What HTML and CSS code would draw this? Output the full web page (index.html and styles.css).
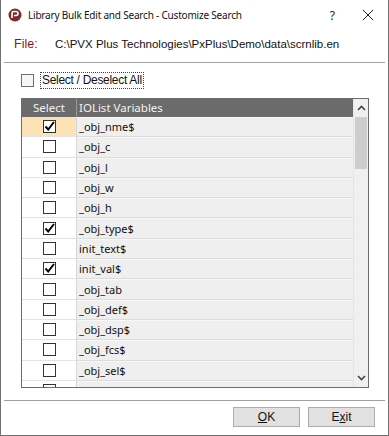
FILE: index.html
```html
<!DOCTYPE html>
<html lang="en">
<head>
    <meta charset="UTF-8">
    <title>Library Bulk Edit and Search - Customize Search</title>
    <link rel="stylesheet" href="styles.css">
</head>
<body>
<div class="window">
    <!-- Title bar -->
    <div class="titlebar">
        <svg class="app-icon" width="14" height="14" viewBox="0 0 14 14">
            <circle cx="7" cy="7" r="6.5" fill="#7a2b2b"/>
            <path d="M4 10 L4 5 Q4 3.5 5.5 3.5 L8 3.5 Q10 3.5 10 5.5 Q10 7.5 8 7.5 L6 7.5" fill="none" stroke="#fff" stroke-width="1.6"/>
        </svg>
        <span class="title">Library Bulk Edit and Search - Customize Search</span>
        <span class="help">?</span>
        <svg class="close" width="12" height="12" viewBox="0 0 12 12">
            <path d="M1 1 L11 11 M11 1 L1 11" stroke="#222" stroke-width="1"/>
        </svg>
    </div>

    <!-- File path -->
    <div class="file-row">
        <span class="file-label">File:</span>
        <span class="file-path">C:\PVX Plus Technologies\PxPlus\Demo\data\scrnlib.en</span>
    </div>

    <div class="sep sep-top"></div>

    <!-- Select all -->
    <div class="select-all">
        <span class="big-box"></span>
        <span class="select-all-label">Select / Deselect All</span>
    </div>

    <!-- Grid -->
    <div class="grid">
        <div class="grid-body">
            <div class="head-cell head-select">Select</div>
            <div class="head-cell head-name">IOList Variables</div>
            <div id="rows" class="rows"></div>
        </div>
        <div class="scrollbar">
            <div class="sb-btn">
                <svg width="9" height="6" viewBox="0 0 9 6"><path d="M1 5 L4.5 1.5 L8 5" fill="none" stroke="#444" stroke-width="1.6"/></svg>
            </div>
            <div class="sb-thumb"></div>
            <div class="sb-track"></div>
            <div class="sb-btn">
                <svg width="9" height="6" viewBox="0 0 9 6"><path d="M1 1 L4.5 4.5 L8 1" fill="none" stroke="#444" stroke-width="1.6"/></svg>
            </div>
        </div>
    </div>

    <div class="sep sep-bottom"></div>

    <!-- Buttons -->
    <div class="buttons">
        <button class="btn"><u>O</u>K</button>
        <button class="btn">E<u>x</u>it</button>
    </div>
</div>

<script>
var vars = [
    ["_obj_nme$", true], ["_obj_c", false], ["_obj_l", false], ["_obj_w", false],
    ["_obj_h", false], ["_obj_type$", true], ["init_text$", false], ["init_val$", true],
    ["_obj_tab", false], ["_obj_def$", false], ["_obj_dsp$", false], ["_obj_fcs$", false],
    ["_obj_sel$", false], ["", false]
];
var check = '<svg width="13" height="13" viewBox="0 0 13 13"><rect x="0.5" y="0.5" width="12" height="12" fill="#fff" stroke="#333"/>' +
            '<path d="M2.5 6.5 L5.2 9.5 L11 2" fill="none" stroke="#000" stroke-width="2"/></svg>';
var empty = '<svg width="13" height="13" viewBox="0 0 13 13"><rect x="0.5" y="0.5" width="12" height="12" fill="#fff" stroke="#333"/></svg>';
var html = "";
vars.forEach(function (v, i) {
    var cls = i == 0 ? "cell cell-select current" : "cell cell-select";
    html += '<div class="' + cls + '">' + (v[1] ? check : empty) + '</div>';
    html += '<div class="cell cell-name">' + v[0] + '</div>';
});
document.getElementById("rows").innerHTML = html;
</script>
</body>
</html>
```

FILE: styles.css
```css
* {
    margin: 0;
    padding: 0;
    box-sizing: border-box;
}

body {
    background: #fff;
    font-family: "Liberation Sans", Arial, sans-serif;
}

/* Dialog frame */
.window {
    width: 389px;
    height: 436px;
    background: #fff;
    border-left: 1px solid #707070;
    border-right: 1px solid #707070;
    border-bottom: 1px solid #707070;
    display: flex;
    flex-direction: column;
}

/* Title bar */
.titlebar {
    height: 30px;
    display: flex;
    align-items: center;
    padding-left: 7px;
}

.app-icon {
    margin-right: 6px;
}

.title {
    font-family: "Noto Sans", sans-serif;
    font-size: 10px;
    letter-spacing: -0.2px;
    color: #111;
    flex: 1;
}

.help {
    font-family: "Noto Sans", sans-serif;
    font-size: 12px;
    color: #222;
    margin-right: 27px;
}

.close {
    margin-right: 14px;
}

/* File row */
.file-row {
    height: 28px;
    display: flex;
    align-items: center;
    padding-left: 13px;
    font-size: 11.5px;
}

.file-label {
    color: #8e1414;
    font-size: 12.5px;
    width: 41px;
}

.file-path {
    color: #111;
}

/* Separators */
.sep {
    height: 2px;
    margin: 0 3px;
    border-top: 1px solid #a0a0a0;
    border-bottom: 1px solid #fff;
}

.sep-top {
    margin-top: 4px;
}

/* Select all */
.select-all {
    display: flex;
    align-items: center;
    height: 17px;
    margin: 8px 0 0 20px;
}

.big-box {
    width: 13px;
    height: 13px;
    border: 1px solid #6f6f6f;
    background: #f4f6f8;
    margin-right: 6px;
}

.select-all-label {
    font-size: 12px;
    letter-spacing: -0.3px;
    color: #111;
    border: 1px dotted #444;
    padding: 0 1px;
    line-height: 15px;
}

/* Grid */
.grid {
    margin: 9px 0 0 20px;
    width: 348px;
    height: 290px;
    border: 1px solid #6c6c6c;
    display: flex;
    overflow: hidden;
}

.grid-body {
    flex: 1;
    display: grid;
    grid-template-columns: 55px 1fr;
    grid-template-rows: 18px 1fr;
    overflow: hidden;
}

.head-cell {
    background: #6b6b6b;
    color: #f2f2f2;
    font-family: "Noto Sans", sans-serif;
    font-size: 11.5px;
    line-height: 18px;
}

.head-select {
    text-align: center;
    border-right: 1px solid #9a9a9a;
}

.head-name {
    padding-left: 2px;
}

.rows {
    grid-column: 1 / 3;
    display: grid;
    grid-template-columns: 55px 1fr;
    grid-auto-rows: 20.3px;
    align-content: start;
}

.cell {
    display: flex;
    align-items: center;
    border-bottom: 1px solid #e2e2e2;
}

.cell-select {
    justify-content: center;
    background: #fff;
    border-right: 1px solid #d6d6d6;
}

.cell-select.current {
    background: #fde2b6;
}

.cell-name {
    background: #efefef;
    border-bottom-color: #dcdcdc;
    box-shadow: inset 0 1px 0 #f8f8f8;
    font-family: "Noto Sans", sans-serif;
    font-size: 11px;
    color: #111;
    padding-left: 2px;
}

/* Scrollbar */
.scrollbar {
    width: 15px;
    display: flex;
    flex-direction: column;
    background: #f0f0f0;
    border-left: 1px solid #e4e4e4;
}

.sb-btn {
    height: 18px;
    display: flex;
    align-items: center;
    justify-content: center;
    background: #f0f0f0;
}

.sb-thumb {
    height: 52px;
    background: #cdcdcd;
    margin: 0 1px;
}

.sb-track {
    flex: 1;
}

/* Buttons */
.sep-bottom {
    margin-top: 12px;
}

.buttons {
    display: flex;
    justify-content: flex-end;
    gap: 8px;
    margin: 5px 13px 0 0;
}

.btn {
    width: 67px;
    height: 20px;
    background: #e1e1e1;
    border: 1px solid #adadad;
    font-family: "Liberation Sans", Arial, sans-serif;
    font-size: 12px;
    color: #111;
}
```
